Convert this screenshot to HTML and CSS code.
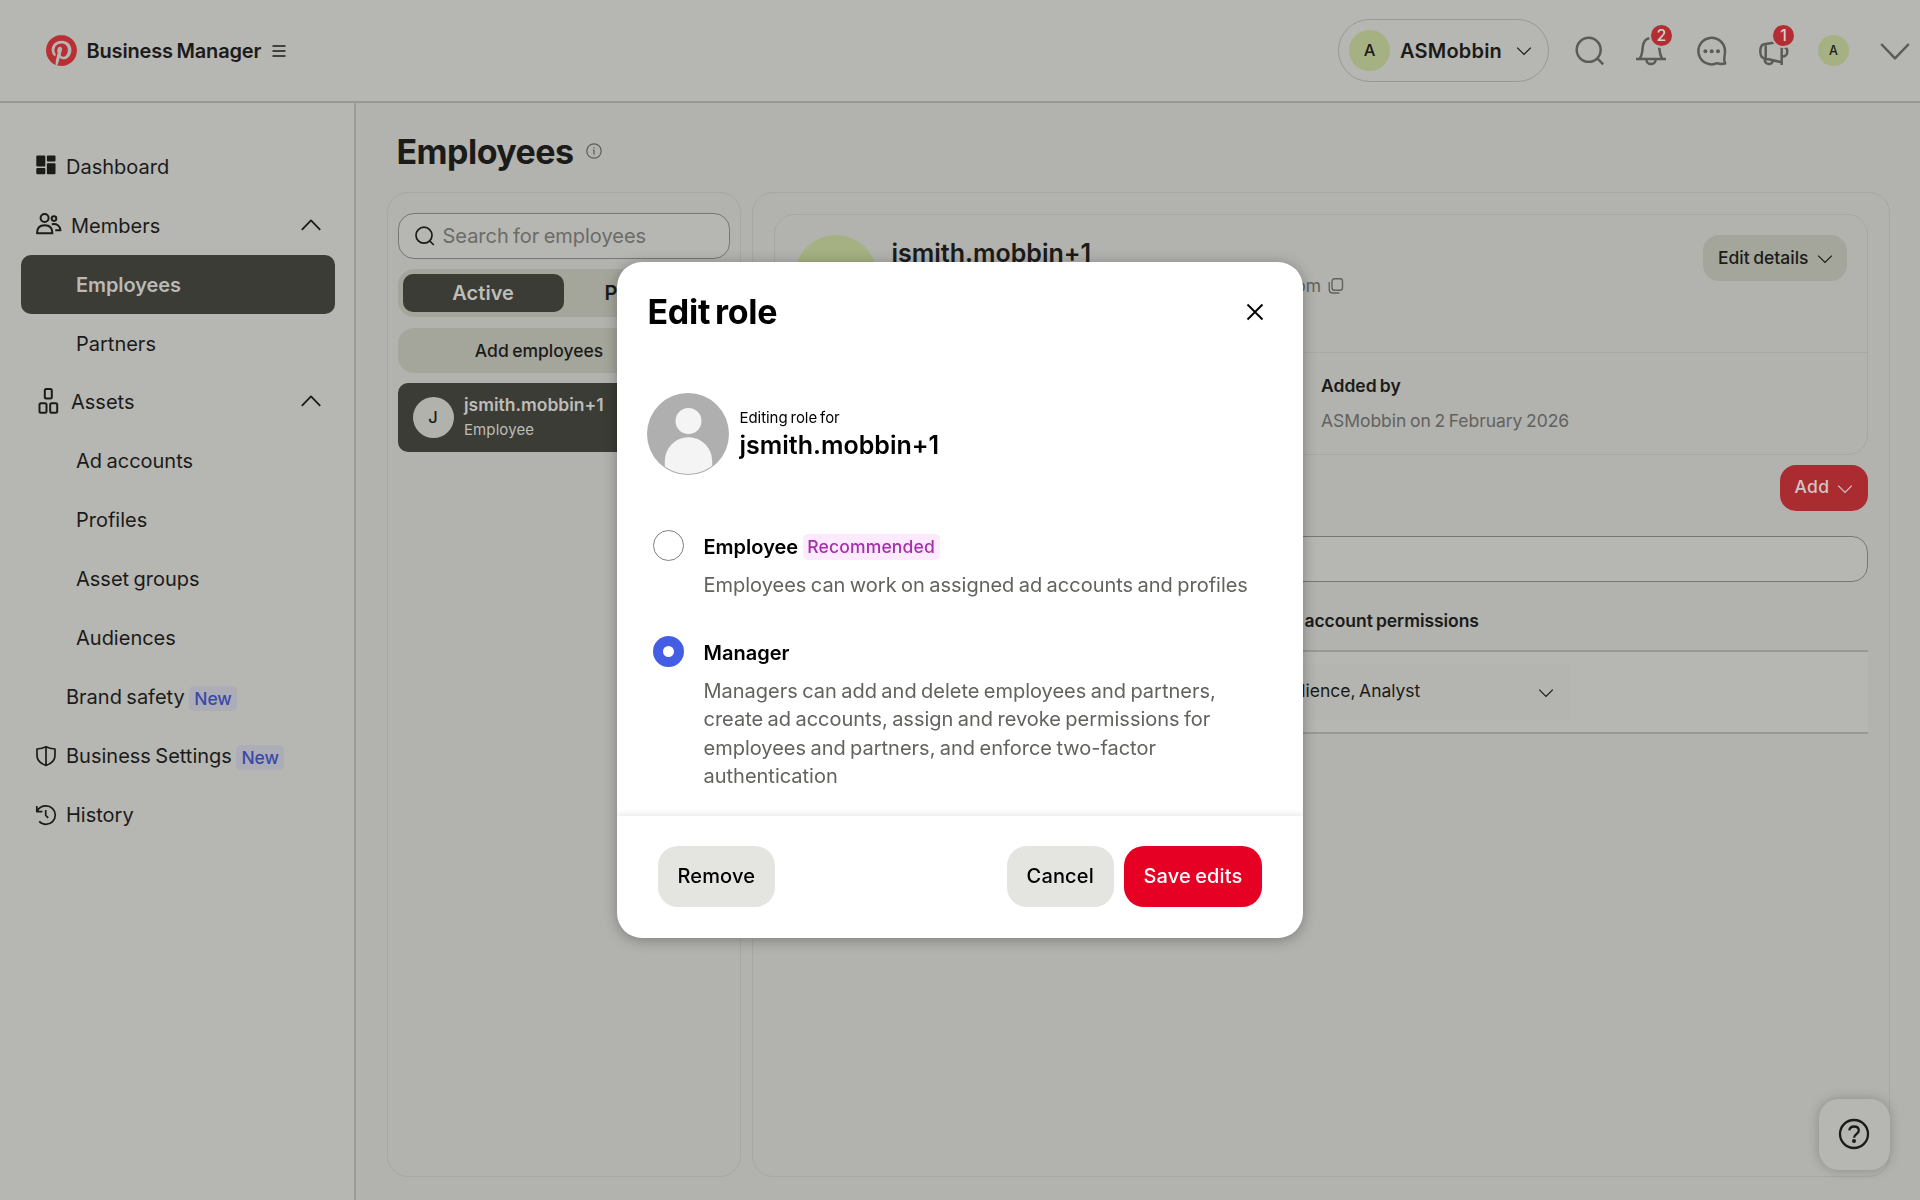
FILE: index.html
```html
<!DOCTYPE html>
<html lang="en">
<head>
<meta charset="utf-8">
<title>Business Manager</title>
<link rel="stylesheet" href="styles.css">
</head>
<body>
<svg class="defs" aria-hidden="true">
  <symbol id="down" viewBox="0 0 16 16"><path d="M1.2 4.6 8 11.4 14.800 4.600"/></symbol>
  <symbol id="up" viewBox="0 0 20 20"><path d="M.8 14.800 10 5.400l9.200 9.400"/></symbol>
</svg>

<div class="app">
  <header class="header">
    <div class="brand">
      <svg class="logo" viewBox="0 0 24 24"><path d="M12.017 0C5.396 0 .029 5.367.029 11.987c0 5.079 3.158 9.417 7.618 11.162-.105-.949-.199-2.403.041-3.439.219-.937 1.406-5.957 1.406-5.957s-.359-.72-.359-1.781c0-1.663.967-2.911 2.168-2.911 1.024 0 1.518.769 1.518 1.688 0 1.029-.653 2.567-.992 3.992-.285 1.193.6 2.165 1.775 2.165 2.128 0 3.768-2.245 3.768-5.487 0-2.861-2.063-4.869-5.008-4.869-3.41 0-5.409 2.562-5.409 5.199 0 1.033.394 2.143.889 2.741.099.12.112.225.085.345-.09.375-.293 1.199-.334 1.363-.053.225-.172.271-.401.165-1.495-.69-2.433-2.878-2.433-4.646 0-3.776 2.748-7.252 7.92-7.252 4.158 0 7.392 2.967 7.392 6.923 0 4.135-2.607 7.462-6.233 7.462-1.214 0-2.354-.629-2.758-1.379l-.749 2.848c-.269 1.045-1.004 2.352-1.498 3.146 1.123.345 2.306.535 3.55.535 6.607 0 11.985-5.365 11.985-11.987C23.97 5.39 18.592.026 11.985.026L12.017 0z"/></svg>
      <span class="brand-name">Business Manager</span>
      <svg class="menu" viewBox="0 0 14 12"><path d="M.5 1h13M.5 6h13M.5 11h13"/></svg>
    </div>
    <div class="account">
      <span class="avatar avatar-md">A</span>
      <span class="account-name">ASMobbin</span>
      <svg class="ic16"><use href="#down"/></svg>
    </div>
    <nav class="tools">
      <span class="tool"><svg viewBox="0 0 36 36"><circle cx="16.700" cy="16.800" r="12"/><path d="m25.300 25.400 5.900 5.900"/></svg></span>
      <span class="tool"><svg viewBox="0 0 36 36"><path d="M3 25.900h30M6.600 25.900c2.600-3.800 2.800-7 3.100-11.400C10.200 8.500 13 5 18 5s7.800 3.500 8.300 9.500c.3 4.400.5 7.600 3.100 11.400M13.300 26.200c0 6.400 9.400 6.400 9.400 0"/></svg><b class="count">2</b></span>
      <span class="tool"><svg viewBox="0 0 36 36"><path d="M31 18A13.300 13.300 0 1 0 23.200 30.200c2.300.9 5 1 8 .4-1.200-2.600-1.300-5-.7-7.600.4-1.600.5-3.300.5-5Z"/><g class="dots"><circle cx="11.400" cy="18.200" r="2"/><circle cx="17.700" cy="18.200" r="2"/><circle cx="24" cy="18.200" r="2"/></g></svg></span>
      <span class="tool"><svg viewBox="0 0 36 36"><path d="M20 9.500 9 11.200c-3 .6-3.700 3-3.700 7s.7 6.300 3.700 7l17.700 4.100M10.700 11v14.500M26.700 12v20M27.700 13.800c3 .1 4.600 1.700 4.600 4.600s-1.600 4.700-4.600 5.200M9.600 26c.4 6.400 7.600 6.400 8.200 1.600"/></svg><b class="count">1</b></span>
      <span class="tool"><span class="avatar avatar-sm">A</span></span>
      <span class="tool"><svg viewBox="0 0 36 36"><path d="M4.200 11 18 25.300 31.800 11"/></svg></span>
    </nav>
  </header>

  <div class="body">
    <aside class="sidebar">
      <a class="item"><svg class="solid" viewBox="0 0 20 20"><rect x=".3" y=".5" width="9" height="11" rx="1"/><rect x="10.900" y=".5" width="8.600" height="6" rx="1"/><rect x=".3" y="13" width="9" height="6.300" rx="1"/><rect x="10.900" y="8.300" width="8.600" height="11" rx="1"/></svg>Dashboard</a>
      <a class="item"><svg class="wide" viewBox="0 0 26 24"><circle cx="8.600" cy="6" r="4"/><circle cx="18" cy="6.600" r="2.300"/><path d="M1 21.200c0-5.200 3-8 7.700-8s7.700 2.800 7.700 8ZM15.800 12.300c5-.9 8.300 1.500 8.700 6h-5.200"/></svg>Members<svg class="caret"><use href="#up"/></svg></a>
      <a class="item sub current">Employees</a>
      <a class="item sub">Partners</a>
      <a class="item"><svg class="wide assets" viewBox="0 0 26 26"><rect x="8.800" y="1" width="7" height="9.500" rx="1.500"/><rect x="3.500" y="15.200" width="7" height="9.500" rx="1.500"/><rect x="14.200" y="15.200" width="7" height="9.500" rx="1.500"/></svg>Assets<svg class="caret"><use href="#up"/></svg></a>
      <a class="item sub">Ad accounts</a>
      <a class="item sub">Profiles</a>
      <a class="item sub">Asset groups</a>
      <a class="item sub">Audiences</a>
      <a class="item plain">Brand safety<span class="new">New</span></a>
      <a class="item"><svg viewBox="0 0 20 20"><path d="M10 .8c2.800 1.500 5.500 2 9 2.200v6c0 5-3.500 8.700-9 10.500C4.500 17.700 1 14 1 9V3c3.500-.2 6.200-.7 9-2.200ZM10 1v18.500"/></svg>Business Settings<span class="new">New</span></a>
      <a class="item"><svg viewBox="0 0 20 20"><path d="M.8 1v5.600h5.600M1 6.400C2.800 2.900 6.200.9 10 .9c5.200 0 9.300 4.100 9.300 9.200s-4.100 9.200-9.300 9.200c-2.700 0-5-1-6.800-2.900M9.700 5v5.400l2.500 2.400"/></svg>History</a>
    </aside>

    <main class="main">
      <div class="title-row">
        <h1>Employees</h1>
        <svg class="info" viewBox="0 0 16 16"><circle cx="8" cy="8" r="7.200"/><path d="M8 7v4.500M8 4.300v1.200M7 7.200h1"/></svg>
      </div>
      <div class="panels">
        <section class="panel list">
          <div class="search">
            <svg viewBox="0 0 20 20"><circle cx="9" cy="9.200" r="8"/><path d="m14.800 15 4 4"/></svg>
            <span>Search for employees</span>
          </div>
          <div class="tabs"><span class="tab on">Active</span><span class="tab">Pending</span></div>
          <div class="add-employees">Add employees</div>
          <div class="person">
            <span class="avatar avatar-j">J</span>
            <div class="person-text"><b>jsmith.mobbin+1</b><span>Employee</span></div>
          </div>
        </section>
        <section class="panel detail">
          <div class="card">
            <div class="card-top">
              <span class="avatar avatar-lg">J</span>
              <div class="who">
                <h2>jsmith.mobbin+1</h2>
                <div class="email"><span>jsmith.mobbin+1@gmail.com</span>
                  <svg viewBox="0 0 16 16"><rect x="4" y=".7" width="10.500" height="11.500" rx="2.500"/><path d="M1.200 4v7.500c0 2.200 1.300 3.500 3.500 3.500h6.800"/></svg></div>
              </div>
              <div class="edit-details">Edit details<svg class="ic16"><use href="#down"/></svg></div>
            </div>
            <div class="card-bottom"><b>Added by</b><span>ASMobbin on 2 February 2026</span></div>
          </div>
          <div class="actions"><div class="add">Add<svg class="ic16"><use href="#down"/></svg></div></div>
          <div class="filter"></div>
          <div class="thead">Ad account permissions</div>
          <div class="trow"><div class="select"><span>Audience, Analyst</span><svg class="ic16"><use href="#down"/></svg></div></div>
        </section>
      </div>
    </main>
  </div>
</div>

<div class="help"><svg viewBox="0 0 32 32"><circle cx="16" cy="16" r="14"/><path d="M11.300 12.300c.4-2.600 2.100-3.800 4.800-3.800 2.900 0 4.700 1.600 4.700 4 0 3.700-4.800 3.700-4.800 7.300"/><circle class="dot" cx="16" cy="22.900" r="2"/></svg></div>

<div class="layer">
  <div class="modal" role="dialog">
    <div class="modal-head">
      <h2>Edit role</h2>
      <svg viewBox="0 0 18 18"><path d="m1.500 1.500 15 15M16.500 1.500l-15 15"/></svg>
    </div>
    <div class="subject">
      <svg viewBox="0 0 82 82"><defs><clipPath id="disc"><circle cx="41" cy="41" r="40"/></clipPath></defs><circle cx="41" cy="41" r="41" fill="#afafaf"/><g clip-path="url(#disc)" fill="#f4f4f4"><circle cx="41.500" cy="28" r="13"/><path d="M17.800 90V68a23.700 23.700 0 0 1 47.400 0v22Z"/></g></svg>
      <div class="subject-text"><span>Editing role for</span><b>jsmith.mobbin+1</b></div>
    </div>
    <div class="role">
      <span class="radio"></span>
      <div>
        <div class="role-name">Employee<span class="rec">Recommended</span></div>
        <p>Employees can work on assigned ad accounts and profiles</p>
      </div>
    </div>
    <div class="role manager">
      <span class="radio checked"></span>
      <div>
        <div class="role-name">Manager</div>
        <p>Managers can add and delete employees and partners,<br>create ad accounts, assign and revoke permissions for<br>employees and partners, and enforce two-factor<br>authentication</p>
      </div>
    </div>
    <div class="modal-foot">
      <button class="btn remove">Remove</button>
      <button class="btn cancel">Cancel</button>
      <button class="btn save">Save edits</button>
    </div>
  </div>
</div>
</body>
</html>
```
FILE: styles.css
```css
* { box-sizing: border-box; }
html, body { height: 100%; margin: 0; overflow: hidden; }
body {
  font: 400 20px/1.2 Inter, "Liberation Sans", sans-serif;
  word-spacing: -.06em;
  color: #1b1b19;
  background: #b6b6b3;
}
h1, h2, p { margin: 0; }
b { font-weight: 600; }
svg { display: block; flex: none; fill: none; stroke: currentColor; stroke-width: 1.800; overflow: visible; }
.defs { position: absolute; width: 0; height: 0; }
.ic16 { width: 16px; height: 16px; stroke-width: 1.200; }

.app { height: 1200px; display: flex; flex-direction: column; }

/* Header */
.header { height: 103px; flex: none; display: flex; align-items: center; padding-left: 45.500px; border-bottom: 2px solid #989896; }
.brand { display: flex; align-items: center; flex: 1; }
.logo { width: 31px; height: 31px; fill: #b83034; stroke: none; }
.brand-name { margin-left: 10px; font-weight: 600; letter-spacing: -.17px; }
.menu { width: 14px; height: 12px; margin-left: 10.500px; stroke-width: 1.300; }
.account { width: 211px; height: 63px; border: 1px solid #989896; border-radius: 32px; display: flex; align-items: center; padding-left: 10.500px; margin-right: 10.500px; }
.account-name { font-weight: 600; letter-spacing: .2px; width: 116px; margin-left: 10px; }
.avatar { display: flex; align-items: center; justify-content: center; flex: none; border-radius: 50%; background: #a5b182; font-weight: 500; }
.avatar-md { width: 41px; height: 41px; font-size: 16.500px; }
.avatar-sm { width: 31px; height: 31px; font-size: 12.500px; }
.avatar-lg { width: 82px; height: 82px; font-size: 32px; }
.avatar-j { width: 41px; height: 41px; font-size: 16.500px; background: #b2b2ad; color: #1b1b19; }
.tools { display: flex; margin-right: -5px; }
.tool { width: 61px; height: 36px; display: flex; align-items: center; justify-content: center; position: relative; color: #5b5b57; }
.tool > svg { width: 36px; height: 36px; stroke-width: 2.500; stroke-linejoin: round; }
.tool .avatar { color: #1b1b19; }
.dots { fill: currentColor; stroke: none; }
.count { position: absolute; left: 29px; top: -9.500px; width: 25px; height: 25px; border: 2px solid #b6b6b3; border-radius: 50%; background: #b32d33; color: #d5cfcd; font-size: 16px; font-weight: 500; line-height: 21.500px; text-align: center; }

/* Sidebar */
.body { flex: 1; display: flex; min-height: 0; }
.sidebar { width: 356px; flex: none; border-right: 2px solid #9b9b99; padding: 34.400px 19px 0 20.500px; }
.item { height: 58.900px; display: flex; align-items: center; padding: 0 14.500px 0 15.500px; gap: 10px; border-radius: 10px; white-space: nowrap; }
.item > svg { width: 20px; height: 20px; stroke-width: 1.700; stroke-linejoin: round; }
.item > .solid { fill: currentColor; stroke: none; margin-top: -3px; }
.item > .wide { width: 26px; height: 24px; margin-right: -1px; margin-top: -3px; stroke-width: 2; }
.item > .assets { height: 26px; margin-top: -3px; }
.item > .caret { margin-left: auto; stroke-width: 1.800; margin-top: -2px; }
.sub { padding-left: 55.500px; }
.plain { padding-left: 45.500px; }
.current { background: #3b3c36; color: #b9b9b5; font-weight: 600; letter-spacing: -.1px; }
.new { font-size: 17.500px; font-weight: 500; letter-spacing: -.1px; color: #3a49a6; background: #adadb8; border-radius: 5px; height: 25px; line-height: 25px; padding: 0 5px 0 5px; margin: 3px 0 0 -5.500px; }

/* Main */
.main { flex: 1; background: #b2b2af; padding: 0 30.500px 0 30.500px; display: flex; flex-direction: column; }
.title-row { height: 89px; padding: 8px 0 0 10px; display: flex; align-items: center; gap: 12.500px; }
h1 { font-size: 34px; font-weight: 700; line-height: 40px; letter-spacing: -.55px; }
.info { width: 16px; height: 16px; color: #5b5b57; stroke-width: 1.200; margin-top: -1px; }
.panels { display: flex; gap: 10.500px; height: 985px; }
.panel { border: 1.500px solid #a7a7a3; border-radius: 21px; }
.list { width: 354.500px; padding: 20px 10px; }
.search { height: 46px; border: 1.500px solid #777774; background: #b6b6b3; border-radius: 16px; display: flex; align-items: center; padding: 0 0 1px 16px; gap: 8px; color: #6b6b68; letter-spacing: -.03px; }
.search svg { width: 20px; height: 20px; stroke-width: 1.700; color: #1b1b19; }
.tabs { height: 48px; margin-top: 10px; background: #a4a59b; border-radius: 16px; padding: 5px; display: flex; }
.tab { flex: 1; display: flex; align-items: center; justify-content: center; font-weight: 600; border-radius: 10px; letter-spacing: .05px; }
.on { background: #3b3c36; color: #bdbdb9; }
.add-employees { width: 283px; height: 45px; margin-top: 11px; background: #a4a59b; border-radius: 16px; font-size: 17.500px; font-weight: 500; display: flex; align-items: center; justify-content: center; }
.person { height: 69px; margin-top: 10px; background: #3b3c36; color: #bdbdb9; border-radius: 10px; display: flex; align-items: center; padding-left: 15px; gap: 10.500px; }
.person-text { display: flex; flex-direction: column; gap: 4.500px; font-size: 17.500px; line-height: 20px; }
.person-text span { font-size: 15px; letter-spacing: .1px; }

.detail { flex: 1; padding: 21px 21px 0; }
.card { height: 241px; border: 1.500px solid #a7a7a3; border-radius: 20px; }
.card-top { height: 138px; border-bottom: 1.500px solid #a7a7a3; padding: 20px 20px 0; display: flex; }
.who { flex: 1; padding: 2px 0 0 15px; }
.who h2 { font-size: 25px; font-weight: 600; line-height: 32px; }
.email { display: flex; align-items: center; width: 452.500px; justify-content: flex-end; gap: 7px; margin-top: 6px; font-size: 17.500px; color: #62625f; }
.email svg { width: 16px; height: 16px; stroke-width: 1.400; }
.edit-details, .add { display: flex; align-items: center; height: 46px; border-radius: 16px; font-size: 17.500px; font-weight: 500; background: #a4a59b; padding: 0 0 2px 15px; gap: 8px; }
.edit-details { width: 143.500px; }
.edit-details svg, .add svg { margin-top: 4px; }
.card-bottom { padding: 21.500px 0 0 546.500px; display: flex; flex-direction: column; gap: 14px; font-size: 17.500px; line-height: 21px; }
.card-bottom span { color: #62625f; letter-spacing: -.04px; }
.actions { display: flex; justify-content: flex-end; padding-top: 9.500px; }
.add { width: 88px; background: #ab2c30; color: #d0c6c5; letter-spacing: .3px; }
.filter { height: 46px; margin-top: 25px; border: 1.500px solid #777774; border-radius: 16px; background: #b6b6b3; }
.thead { height: 68px; line-height: 78px; padding-left: 504.500px; font-size: 17.500px; font-weight: 600; letter-spacing: -.05px; }
.trow { height: 84px; border: solid #989896; border-width: 2px 0; background: #b6b6b3; padding: 12px 299px 0 475px; }
.select { height: 56px; display: flex; align-items: center; justify-content: space-between; padding: 0 15px 2px 24px; background: #b4b4b1; font-size: 17.500px; letter-spacing: -.03px; }
.select svg { margin-top: 5px; }

/* Help button */
.help { position: fixed; right: 30.500px; bottom: 30.500px; width: 71px; height: 71px; border-radius: 20px; background: #b6b6b3; box-shadow: 0 0 12px rgba(0,0,0,.22); display: flex; align-items: center; justify-content: center; }
.help svg { width: 32px; height: 32px; stroke-width: 2.300; }
.dot { fill: currentColor; stroke: none; }

/* Dialog */
.layer { position: fixed; inset: 0; display: flex; align-items: center; justify-content: center; color: #000; }
.modal { width: 686px; height: 676px; background: #fff; border-radius: 25px; box-shadow: 0 2px 14px rgba(0,0,0,.3); display: flex; flex-direction: column; overflow: hidden; }
.modal-head { height: 131px; padding: 30px 39.500px 0 30.500px; display: flex; justify-content: space-between; }
.modal-head h2 { font-size: 34px; font-weight: 700; line-height: 40px; letter-spacing: -.3px; word-spacing: -.08em; }
.modal-head svg { width: 18px; height: 18px; margin-top: 11px; stroke-width: 1.900; }
.subject { display: flex; align-items: center; gap: 10.500px; padding-left: 30px; }
.subject svg { width: 82px; height: 82px; stroke: none; }
.subject-text { display: flex; flex-direction: column; }
.subject-text span { font-size: 15px; line-height: 22px; letter-spacing: -.05px; }
.subject-text b { font-size: 25px; line-height: 32px; }
.role { display: flex; gap: 20px; padding: 55px 0 0 35.500px; }
.manager { padding-top: 36px; }
.manager p { padding-top: 8px; }
.radio { width: 31px; height: 31px; border: 1px solid #80807d; border-radius: 50%; flex: none; }
.checked { border: 10.500px solid #435ee5; background: #fff; }
.role-name { font-weight: 600; height: 32px; display: flex; align-items: center; padding-top: 2px; }
.rec { font-size: 17.500px; font-weight: 500; letter-spacing: .18px; color: #a72daf; background: #fdeafe; border-radius: 5px; height: 26px; line-height: 26px; padding: 0 5px 0 4px; margin-left: 5px; }
.role p { line-height: 28.500px; color: #62625f; padding-top: 9px; letter-spacing: -.01px; }
.modal-foot { margin-top: auto; height: 122px; flex: none; padding: 30px 41px 0 40.500px; display: flex; gap: 10.500px; box-shadow: 0 0 8px rgba(0,0,0,.14); }
.btn { height: 61px; border: 0; border-radius: 20px; background: #e4e5e0; color: #000; font: 500 20px Inter, "Liberation Sans", sans-serif; word-spacing: -.06em; letter-spacing: .15px; padding: 0 0 1px; }
.remove { width: 117.500px; margin-right: auto; }
.cancel { width: 106.500px; }
.save { width: 138px; background: #e60023; color: #fff; }
```
